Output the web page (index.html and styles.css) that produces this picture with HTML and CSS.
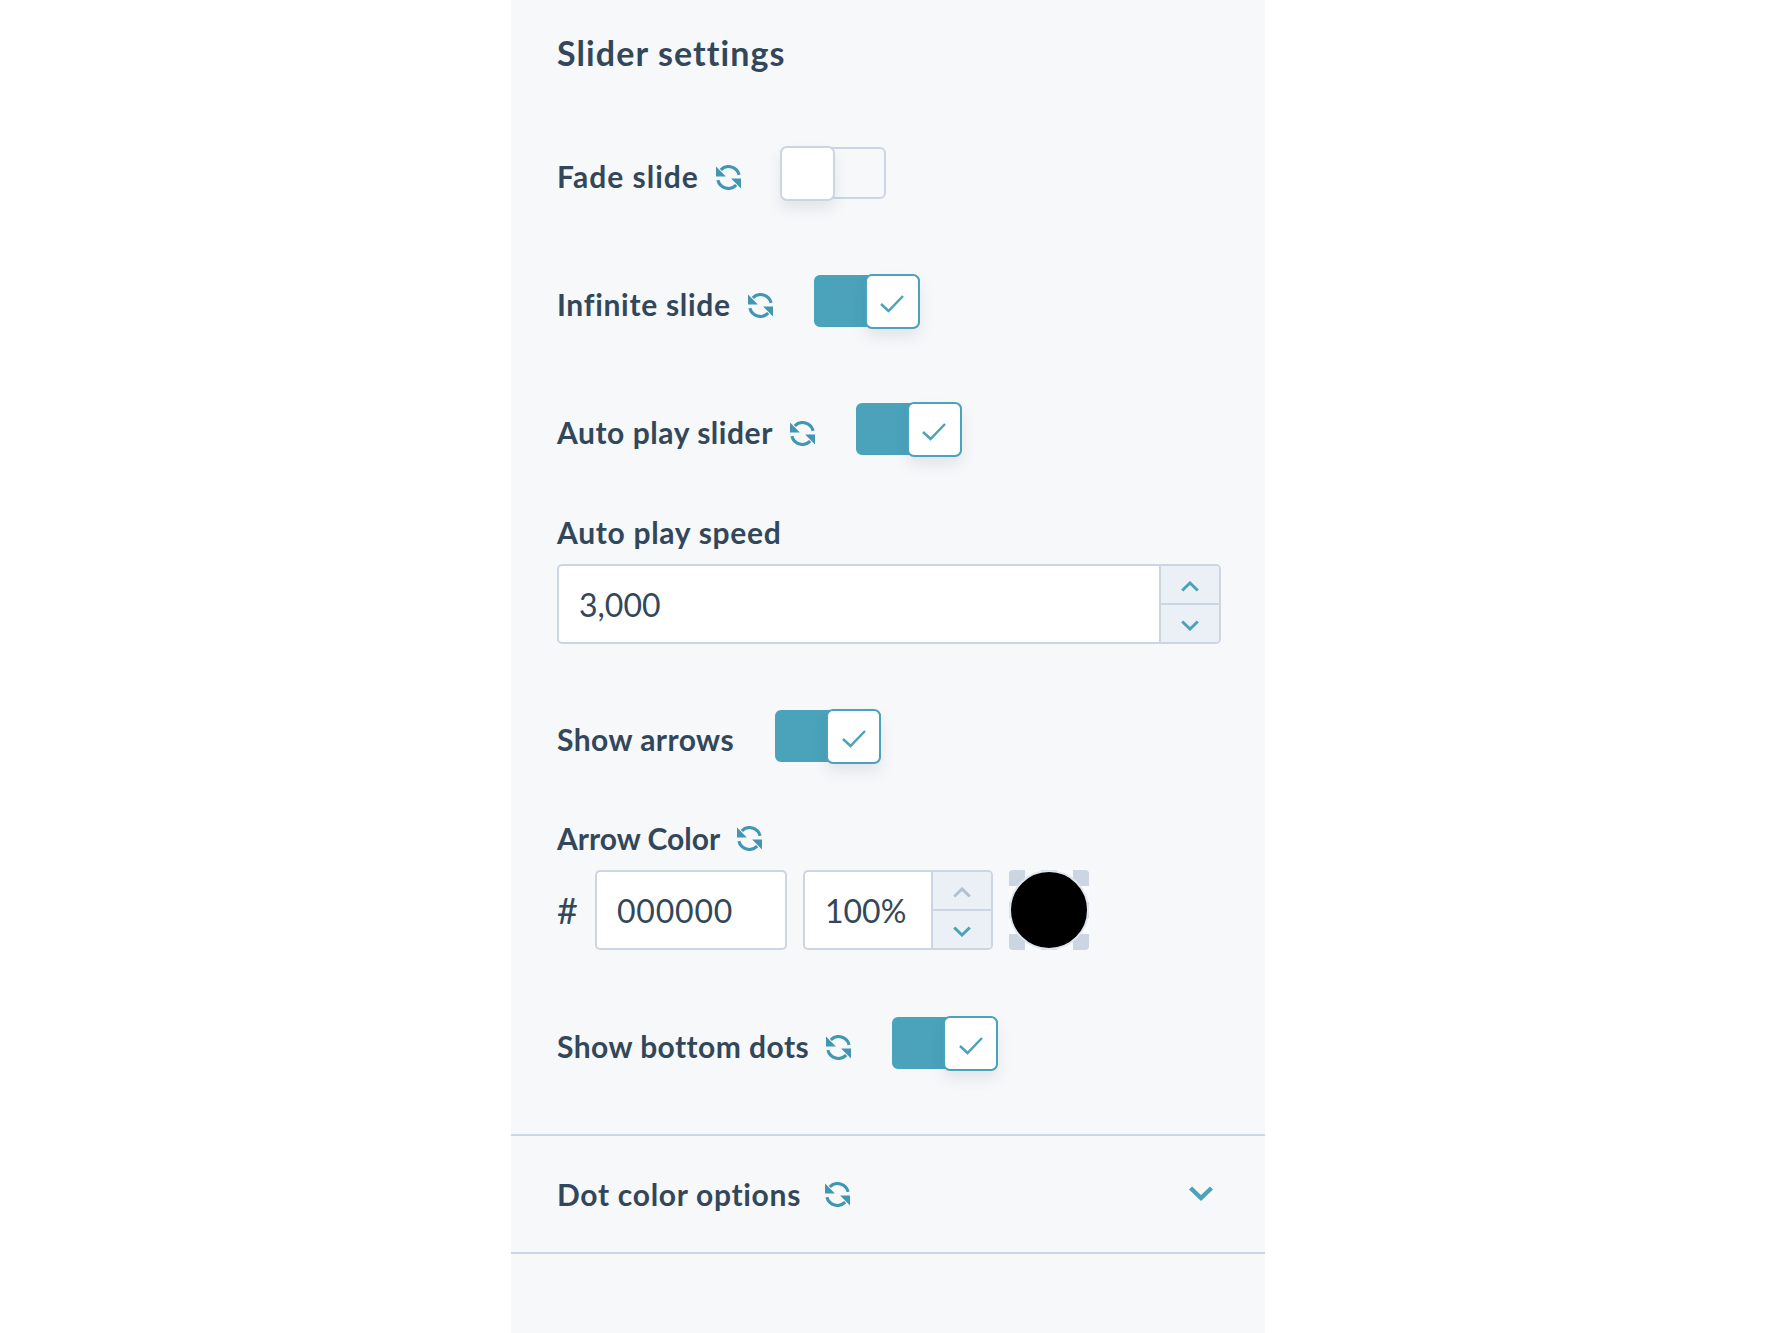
FILE: index.html
```html
<!DOCTYPE html>
<html lang="en">
<head>
    <meta charset="UTF-8">
    <meta name="viewport" content="width=device-width, initial-scale=1.0">
    <title>Slider settings</title>
    <link rel="stylesheet" href="styles.css">
</head>
<body>
    <svg class="sprites" width="0" height="0" aria-hidden="true">
        <symbol id="refresh" viewBox="0 0 24 24">
            <path d="M22.2 9.5A10.5 10.5 0 0 0 4.6 4.6" fill="none" stroke="currentColor" stroke-width="3"/>
            <path d="M0 1.5L9.5 11H0z" fill="currentColor"/>
            <path d="M1.8 14.5A10.5 10.5 0 0 0 19.4 19.4" fill="none" stroke="currentColor" stroke-width="3"/>
            <path d="M24 22.5L14.5 13H24z" fill="currentColor"/>
        </symbol>
        <symbol id="check" viewBox="0 0 24 18">
            <path d="M1 9L8.5 16L23 1" fill="none" stroke="currentColor" stroke-width="2.5"/>
        </symbol>
        <symbol id="chev-up" viewBox="0 0 18 11">
            <path d="M1.2 9.5L9 2L16.8 9.5" fill="none" stroke="currentColor" stroke-width="3"/>
        </symbol>
        <symbol id="chev-down" viewBox="0 0 18 11">
            <path d="M1.2 1.5L9 9L16.8 1.5" fill="none" stroke="currentColor" stroke-width="3"/>
        </symbol>
        <symbol id="chev-bold" viewBox="0 0 24 15">
            <path d="M1.5 2L12 12L22.5 2" fill="none" stroke="currentColor" stroke-width="4.4"/>
        </symbol>
    </svg>

    <aside class="panel">
        <div class="panel-body">
            <h2 class="panel-title">Slider settings</h2>

            <div class="toggle-row">
                <span class="label wide">Fade slide</span>
                <svg class="icon-refresh"><use href="#refresh"/></svg>
                <div class="toggle off"><div class="knob"></div></div>
            </div>

            <div class="toggle-row">
                <span class="label">Infinite slide</span>
                <svg class="icon-refresh"><use href="#refresh"/></svg>
                <div class="toggle on"><div class="knob"><svg class="icon-check"><use href="#check"/></svg></div></div>
            </div>

            <div class="toggle-row">
                <span class="label snug">Auto play slider</span>
                <svg class="icon-refresh"><use href="#refresh"/></svg>
                <div class="toggle on"><div class="knob"><svg class="icon-check"><use href="#check"/></svg></div></div>
            </div>

            <div class="field speed-field">
                <div class="field-label"><span class="label">Auto play speed</span></div>
                <div class="number-input">
                    <div class="input-value">3,000</div>
                    <div class="stepper">
                        <div class="step"><svg class="icon-chev"><use href="#chev-up"/></svg></div>
                        <div class="step"><svg class="icon-chev"><use href="#chev-down"/></svg></div>
                    </div>
                </div>
            </div>

            <div class="toggle-row arrows-row">
                <span class="label tight">Show arrows</span>
                <div class="toggle on"><div class="knob"><svg class="icon-check"><use href="#check"/></svg></div></div>
            </div>

            <div class="field color-field">
                <div class="field-label">
                    <span class="label tighter">Arrow Color</span>
                    <svg class="icon-refresh"><use href="#refresh"/></svg>
                </div>
                <div class="color-row">
                    <span class="hash">#</span>
                    <div class="text-input hex-input"><div class="input-value">000000</div></div>
                    <div class="number-input alpha-input">
                        <div class="input-value">100%</div>
                        <div class="stepper">
                            <div class="step disabled"><svg class="icon-chev"><use href="#chev-up"/></svg></div>
                            <div class="step"><svg class="icon-chev"><use href="#chev-down"/></svg></div>
                        </div>
                    </div>
                    <div class="swatch"><div class="swatch-dot"></div></div>
                </div>
            </div>

            <div class="toggle-row dots-row">
                <span class="label tight">Show bottom dots</span>
                <svg class="icon-refresh"><use href="#refresh"/></svg>
                <div class="toggle on"><div class="knob"><svg class="icon-check"><use href="#check"/></svg></div></div>
            </div>
        </div>

        <div class="accordion">
            <span class="label">Dot color options</span>
            <svg class="icon-refresh"><use href="#refresh"/></svg>
            <svg class="icon-accordion"><use href="#chev-bold"/></svg>
        </div>
    </aside>
</body>
</html>
```

FILE: styles.css
```css
:root {
    --panel-background: #f7f8fa;
    --text-color: #33475b;
    --border-color: #cbd6e2;
    --stepper-background: #eaf0f6;
    --accent-color: #4aa3bb;
    --icon-color: #4096b3;
}

* {
    margin: 0;
    padding: 0;
    box-sizing: border-box;
}

body {
    font-family: Lato, "Open Sans", sans-serif;
    background-color: #ffffff;
    color: var(--text-color);
    min-height: 1333px;
    display: flex;
    justify-content: center;
}

.sprites {
    display: none;
}

.panel {
    width: 754px;
    height: 1333px;
    margin-left: -1px;
    background-color: var(--panel-background);
}

.panel-body {
    padding: 33px 44px 64px 46px;
}

.panel-title {
    font-size: 34px;
    font-weight: 700;
    line-height: 40px;
    letter-spacing: 1.1px;
    margin-bottom: 72px;
}

.label {
    font-size: 30px;
    font-weight: 700;
    line-height: 32px;
    letter-spacing: 0.7px;
}

.label.wide {
    letter-spacing: 1px;
}

.label.snug {
    letter-spacing: 0.55px;
}

.label.tight {
    letter-spacing: 0.45px;
}

.label.tighter {
    letter-spacing: 0;
}

.toggle-row {
    display: flex;
    align-items: flex-start;
    height: 55px;
    margin-bottom: 73px;
}

.toggle-row .label {
    margin-top: 15px;
}

.icon-refresh {
    flex: none;
    width: 25px;
    height: 25px;
    margin-left: 17px;
    color: var(--icon-color);
}

.toggle-row .icon-refresh {
    margin-top: 20px;
}

.toggle {
    flex: none;
    display: flex;
    width: 106px;
    height: 52px;
    margin-top: 2px;
    margin-left: 41px;
    border: 2px solid var(--border-color);
    border-radius: 6px;
}

.toggle.off {
    margin-left: 39px;
}

.toggle.on {
    justify-content: flex-end;
    background-color: var(--accent-color);
    border-color: var(--accent-color);
}

.knob {
    display: flex;
    align-items: center;
    justify-content: center;
    width: 55px;
    height: 55px;
    margin: -3px -2px 0;
    background-color: #ffffff;
    border: 2px solid var(--border-color);
    border-radius: 7px;
    box-shadow: 0 8px 14px rgba(51, 71, 91, 0.1);
}

.toggle.on .knob {
    border-color: var(--accent-color);
}

.icon-check {
    width: 24px;
    height: 18px;
    margin-top: 5px;
    color: var(--accent-color);
}

.field-label {
    display: flex;
    align-items: center;
    height: 32px;
    margin-bottom: 16px;
}

.speed-field {
    margin-top: -13px;
    margin-bottom: 64px;
}

.arrows-row {
    margin-bottom: 59px;
}

.number-input,
.text-input {
    display: flex;
    height: 80px;
    background-color: #ffffff;
    border: 2px solid var(--border-color);
    border-radius: 5px;
    overflow: hidden;
}

.input-value {
    flex: 1;
    align-self: center;
    font-size: 32px;
    padding-left: 20px;
}

.hex-input .input-value {
    letter-spacing: 0.8px;
}

.stepper {
    display: flex;
    flex-direction: column;
    flex: none;
    width: 60px;
    background-color: var(--stepper-background);
    border-left: 2px solid var(--border-color);
}

.step {
    flex: 1;
    display: flex;
    align-items: center;
    justify-content: center;
    color: var(--accent-color);
}

.step + .step {
    border-top: 2px solid var(--border-color);
}

.step.disabled {
    color: #b0c1d4;
}

.icon-chev {
    width: 18px;
    height: 11px;
    margin-top: 3px;
}

.color-field {
    margin-bottom: 65px;
}

.color-row {
    display: flex;
    align-items: center;
}

.hash {
    width: 38px;
    font-size: 36px;
}

.hex-input {
    width: 192px;
    margin-right: 16px;
}

.alpha-input {
    width: 190px;
    margin-right: 16px;
}

.swatch {
    display: flex;
    align-items: center;
    justify-content: center;
    width: 80px;
    height: 80px;
    border-radius: 4px;
    background: repeating-conic-gradient(#fafbfc 0 25%, #cbd6e2 0 50%) 0 0 / 32px 32px;
}

.swatch-dot {
    width: 80px;
    height: 80px;
    flex: none;
    background-color: #000000;
    border: 2px solid #dfe6ee;
    border-radius: 50%;
}

.dots-row {
    margin-bottom: 0;
}

.accordion {
    display: flex;
    align-items: center;
    height: 120px;
    padding: 0 52px 0 46px;
    border-top: 2px solid var(--border-color);
    border-bottom: 2px solid var(--border-color);
}

.accordion .icon-refresh {
    margin-left: 24px;
}

.icon-accordion {
    width: 24px;
    height: 15px;
    margin-left: auto;
    margin-bottom: 2px;
    color: var(--accent-color);
}
```
